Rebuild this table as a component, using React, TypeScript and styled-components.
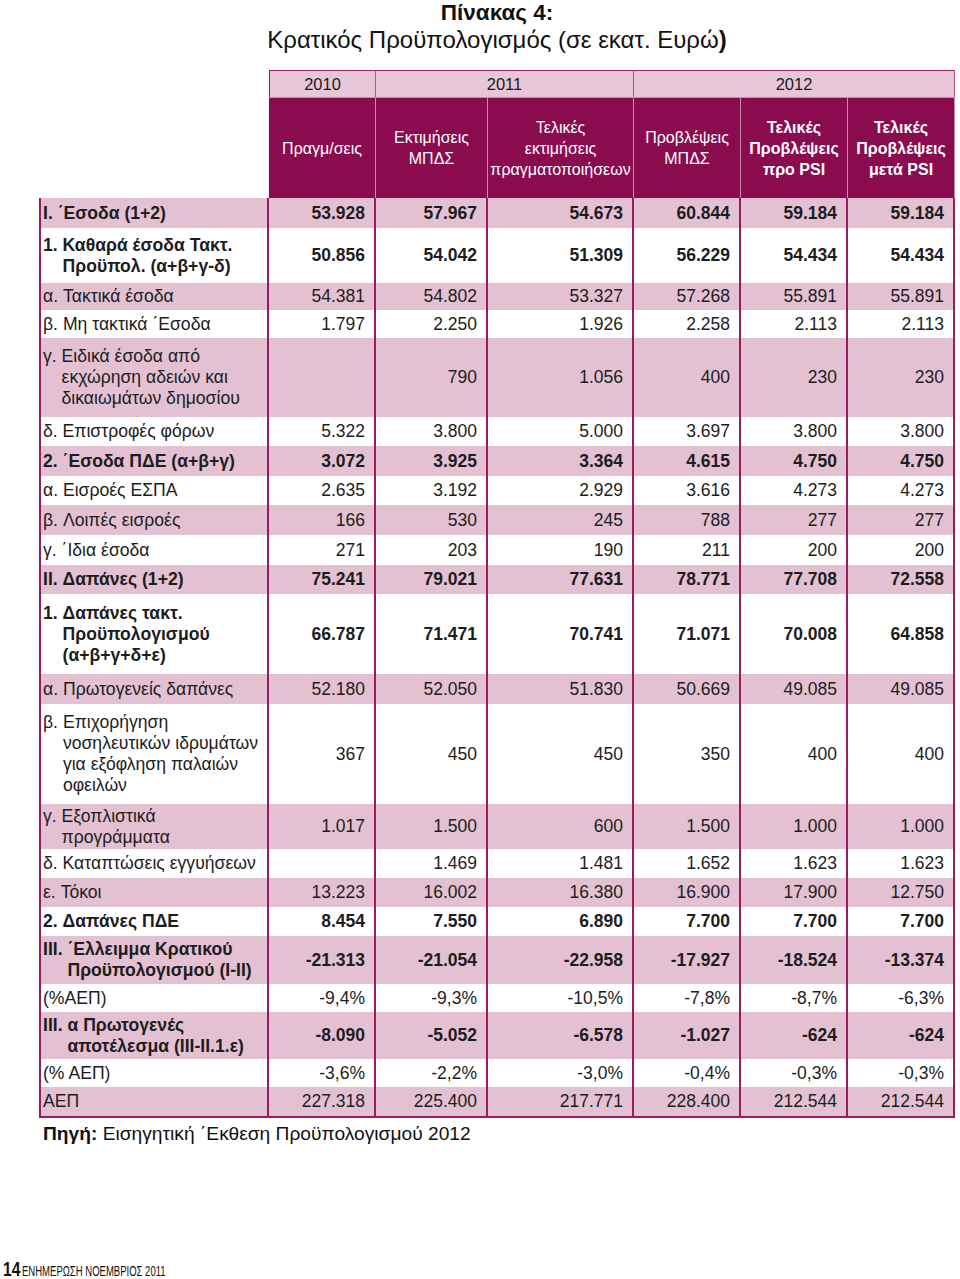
import React from "react";
import styled, { createGlobalStyle } from "styled-components";

const GlobalStyle = createGlobalStyle`
  * { box-sizing: border-box; }
  html, body { margin: 0; padding: 0; background: #ffffff; }
  body { font-family: "Liberation Sans", Arial, sans-serif; color: #1d1d1d; }
`;

const MAGENTA = "#9a1b5f";
const DARK = "#8b0b4f";
const PINK = "#e3c1d2";
const HEAD_PINK = "#e7c7d7";
const COLS = "230px 107px 112px 146px 107px 107px 107px";

const Page = styled.div`
  width: 960px;
  min-height: 1279px;
  display: flex;
  flex-direction: column;
`;

const Content = styled.div`
  width: 916px;
  margin-left: 39px;
  display: flex;
  flex-direction: column;
`;

const Title = styled.div`
  text-align: center;
  font-weight: 700;
  font-size: 22.5px;
  line-height: 26px;
  color: #111;
`;

const Subtitle = styled.div`
  text-align: center;
  font-size: 24px;
  line-height: 28px;
  color: #111;
  margin-bottom: 16px;
`;

const Bold = styled.b`
  font-weight: 700;
`;

const HeadRow = styled.div<{ $h: number }>`
  display: grid;
  grid-template-columns: ${COLS};
  height: ${(p) => p.$h}px;
`;

const Blank = styled.div``;

const YearCell = styled.div<{ $span: number; $first?: boolean }>`
  grid-column: span ${(p) => p.$span};
  background: ${HEAD_PINK};
  border-top: 1px solid ${MAGENTA};
  border-right: 1px solid #b4557f;
  border-left: ${(p) => (p.$first ? `1px solid ${MAGENTA}` : "none")};
  display: flex;
  align-items: center;
  justify-content: center;
  font-size: 16.5px;
  color: #1a1a1a;
`;

const ColHead = styled.div<{ $bold?: boolean }>`
  background: ${DARK};
  color: #ffffff;
  border-right: 1px solid #c98aa9;
  border-top: 1px solid #c98aa9;
  display: flex;
  align-items: center;
  justify-content: center;
  text-align: center;
  font-size: 16px;
  line-height: 21px;
  font-weight: ${(p) => (p.$bold ? 700 : 400)};
  padding: 0 3px;
`;

const Body = styled.div`
  border-bottom: 2px solid ${MAGENTA};
`;

const Row = styled.div<{ $h: number; $pink: boolean }>`
  display: grid;
  grid-template-columns: ${COLS};
  height: ${(p) => p.$h}px;
  background: ${(p) => (p.$pink ? PINK : "#ffffff")};
`;

const LabelCell = styled.div<{ $bold: boolean }>`
  border-left: 2px solid ${MAGENTA};
  border-right: 2px solid ${MAGENTA};
  padding-left: 2px;
  display: flex;
  align-items: center;
  font-size: 17.6px;
  line-height: 21px;
  font-weight: ${(p) => (p.$bold ? 700 : 400)};
  white-space: nowrap;
`;

const Prefix = styled.span`
  white-space: pre;
  align-self: flex-start;
`;

const LabelLines = styled.div`
  display: flex;
  flex-direction: column;
`;

const LabelWrap = styled.div`
  display: flex;
`;

const NumCell = styled.div<{ $bold: boolean }>`
  border-right: 2px solid ${MAGENTA};
  display: flex;
  align-items: center;
  justify-content: flex-end;
  padding-right: 9px;
  font-size: 17.5px;
  font-weight: ${(p) => (p.$bold ? 700 : 400)};
`;

const Source = styled.div`
  margin-top: 5px;
  padding-left: 4px;
  font-size: 19.2px;
  line-height: 22px;
  color: #111;
`;

const Footer = styled.div`
  margin-top: auto;
  padding-left: 3px;
  height: 22px;
  display: flex;
  align-items: flex-end;
  padding-bottom: 1px;
  color: #111;
`;

const PageNum = styled.span`
  font-weight: 700;
  font-size: 20px;
  line-height: 18px;
  display: inline-block;
  width: 19px;
  transform: scaleX(0.78);
  transform-origin: left bottom;
`;

const FooterText = styled.span`
  font-size: 14px;
  line-height: 14px;
  display: inline-block;
  transform: scaleX(0.68);
  transform-origin: left bottom;
  white-space: nowrap;
`;

type RowData = {
  prefix?: string;
  lines: string[];
  bold?: boolean;
  values: string[];
  h: number;
};

const rows: RowData[] = [
  { prefix: "Ι. ", lines: ["΄Εσοδα (1+2)"], bold: true, values: ["53.928", "57.967", "54.673", "60.844", "59.184", "59.184"], h: 30 },
  { prefix: "1. ", lines: ["Καθαρά έσοδα Τακτ.", "Προϋπολ. (α+β+γ-δ)"], bold: true, values: ["50.856", "54.042", "51.309", "56.229", "54.434", "54.434"], h: 55 },
  { prefix: "α. ", lines: ["Τακτικά έσοδα"], values: ["54.381", "54.802", "53.327", "57.268", "55.891", "55.891"], h: 27 },
  { prefix: "β. ", lines: ["Μη τακτικά ΄Εσοδα"], values: ["1.797", "2.250", "1.926", "2.258", "2.113", "2.113"], h: 28 },
  { prefix: "γ. ", lines: ["Ειδικά έσοδα από", "εκχώρηση αδειών και", "δικαιωμάτων δημοσίου"], values: ["", "790", "1.056", "400", "230", "230"], h: 79 },
  { prefix: "δ. ", lines: ["Επιστροφές φόρων"], values: ["5.322", "3.800", "5.000", "3.697", "3.800", "3.800"], h: 29 },
  { prefix: "2. ", lines: ["΄Εσοδα ΠΔΕ (α+β+γ)"], bold: true, values: ["3.072", "3.925", "3.364", "4.615", "4.750", "4.750"], h: 30 },
  { prefix: "α. ", lines: ["Εισροές ΕΣΠΑ"], values: ["2.635", "3.192", "2.929", "3.616", "4.273", "4.273"], h: 29 },
  { prefix: "β. ", lines: ["Λοιπές εισροές"], values: ["166", "530", "245", "788", "277", "277"], h: 30 },
  { prefix: "γ. ", lines: ["΄Ιδια έσοδα"], values: ["271", "203", "190", "211", "200", "200"], h: 30 },
  { prefix: "ΙΙ. ", lines: ["Δαπάνες (1+2)"], bold: true, values: ["75.241", "79.021", "77.631", "78.771", "77.708", "72.558"], h: 29 },
  { prefix: "1. ", lines: ["Δαπάνες τακτ.", "Προϋπολογισμού", "(α+β+γ+δ+ε)"], bold: true, values: ["66.787", "71.471", "70.741", "71.071", "70.008", "64.858"], h: 80 },
  { prefix: "α. ", lines: ["Πρωτογενείς δαπάνες"], values: ["52.180", "52.050", "51.830", "50.669", "49.085", "49.085"], h: 30 },
  { prefix: "β. ", lines: ["Επιχορήγηση", "νοσηλευτικών ιδρυμάτων", "για εξόφληση παλαιών", "οφειλών"], values: ["367", "450", "450", "350", "400", "400"], h: 100 },
  { prefix: "γ. ", lines: ["Εξοπλιστικά", "προγράμματα"], values: ["1.017", "1.500", "600", "1.500", "1.000", "1.000"], h: 45 },
  { prefix: "δ. ", lines: ["Καταπτώσεις εγγυήσεων"], values: ["", "1.469", "1.481", "1.652", "1.623", "1.623"], h: 29 },
  { prefix: "ε. ", lines: ["Τόκοι"], values: ["13.223", "16.002", "16.380", "16.900", "17.900", "12.750"], h: 29 },
  { prefix: "2. ", lines: ["Δαπάνες ΠΔΕ"], bold: true, values: ["8.454", "7.550", "6.890", "7.700", "7.700", "7.700"], h: 29 },
  { prefix: "ΙΙΙ. ", lines: ["΄Ελλειμμα Κρατικού", "Προϋπολογισμού (Ι-ΙΙ)"], bold: true, values: ["-21.313", "-21.054", "-22.958", "-17.927", "-18.524", "-13.374"], h: 48 },
  { lines: ["(%ΑΕΠ)"], values: ["-9,4%", "-9,3%", "-10,5%", "-7,8%", "-8,7%", "-6,3%"], h: 28 },
  { prefix: "ΙΙΙ. ", lines: ["α Πρωτογενές", "αποτέλεσμα (ΙΙΙ-ΙΙ.1.ε)"], bold: true, values: ["-8.090", "-5.052", "-6.578", "-1.027", "-624", "-624"], h: 47 },
  { lines: ["(% ΑΕΠ)"], values: ["-3,6%", "-2,2%", "-3,0%", "-0,4%", "-0,3%", "-0,3%"], h: 28 },
  { lines: ["ΑΕΠ"], values: ["227.318", "225.400", "217.771", "228.400", "212.544", "212.544"], h: 29 },
];

const heads: { lines: string[]; bold?: boolean }[] = [
  { lines: ["Πραγμ/σεις"] },
  { lines: ["Εκτιμήσεις", "ΜΠΔΣ"] },
  { lines: ["Τελικές", "εκτιμήσεις", "πραγματοποιήσεων"] },
  { lines: ["Προβλέψεις", "ΜΠΔΣ"] },
  { lines: ["Τελικές", "Προβλέψεις", "προ PSI"], bold: true },
  { lines: ["Τελικές", "Προβλέψεις", "μετά PSI"], bold: true },
];

export default function App() {
  return (
    <Page>
      <GlobalStyle />
      <Content>
        <Title>Πίνακας 4:</Title>
        <Subtitle>
          Κρατικός Προϋπολογισμός (σε εκατ. Ευρώ<Bold>)</Bold>
        </Subtitle>

        <HeadRow $h={27}>
          <Blank />
          <YearCell $span={1} $first>2010</YearCell>
          <YearCell $span={2}>2011</YearCell>
          <YearCell $span={3}>2012</YearCell>
        </HeadRow>
        <HeadRow $h={101}>
          <Blank />
          {heads.map((h, i) => (
            <ColHead key={i} $bold={h.bold}>
              <div>
                {h.lines.map((l, j) => (
                  <div key={j}>{l}</div>
                ))}
              </div>
            </ColHead>
          ))}
        </HeadRow>

        <Body>
          {rows.map((r, i) => (
            <Row key={i} $h={r.h} $pink={i % 2 === 0}>
              <LabelCell $bold={!!r.bold}>
                <LabelWrap>
                  {r.prefix && <Prefix>{r.prefix}</Prefix>}
                  <LabelLines>
                    {r.lines.map((l, j) => (
                      <span key={j}>{l}</span>
                    ))}
                  </LabelLines>
                </LabelWrap>
              </LabelCell>
              {r.values.map((v, j) => (
                <NumCell key={j} $bold={!!r.bold}>
                  {v}
                </NumCell>
              ))}
            </Row>
          ))}
        </Body>

        <Source>
          <Bold>Πηγή:</Bold> Εισηγητική ΄Εκθεση Προϋπολογισμού 2012
        </Source>
      </Content>
      <Footer>
        <PageNum>14</PageNum>
        <FooterText>ΕΝΗΜΕΡΩΣΗ ΝΟΕΜΒΡΙΟΣ 2011</FooterText>
      </Footer>
    </Page>
  );
}
